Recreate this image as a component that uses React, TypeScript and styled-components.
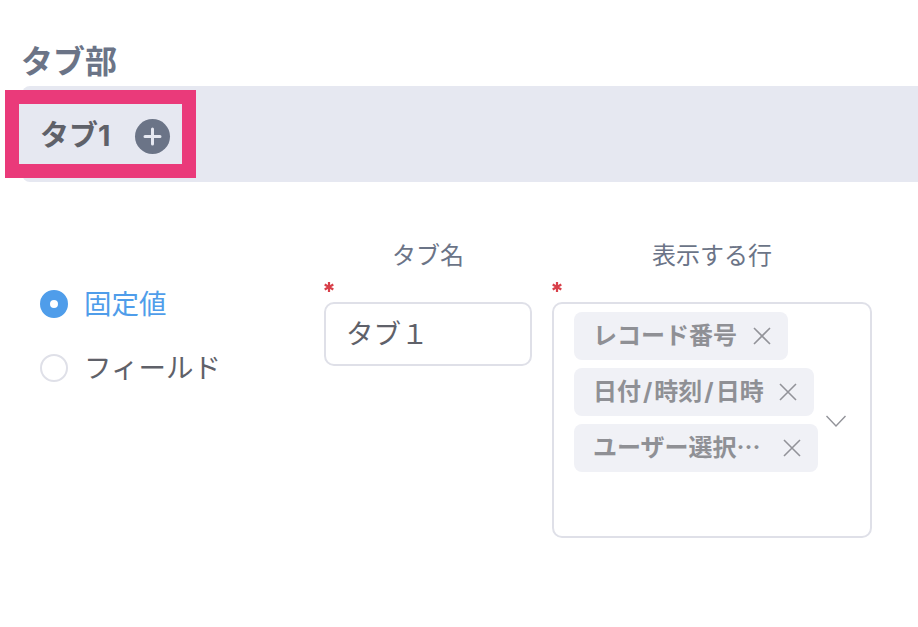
import React from 'react';
import styled, { createGlobalStyle } from 'styled-components';

const GlobalStyle = createGlobalStyle`
  html, body {
    margin: 0;
    padding: 0;
    background: #fff;
    font-family: "Inter", "Noto Sans CJK JP", sans-serif;
  }
`;

const Page = styled.div`
  width: 918px;
  height: 627px;
  overflow: hidden;
  padding-top: 42px;
  box-sizing: border-box;
`;

const Title = styled.h2`
  margin: 0 0 0 21px;
  height: 44px;
  font-size: 32px;
  line-height: 40px;
  font-weight: 700;
  color: #6b7487;
`;

const TabBar = styled.div`
  margin-left: 22px;
  height: 96px;
  display: flex;
  align-items: center;
  background: #e6e8f1;
  border-radius: 8px 0 0 8px;
`;

const Tab = styled.div`
  margin-left: -17px;
  width: 191px;
  height: 88px;
  box-sizing: border-box;
  border: 14px solid #ea3a7a;
  background: #e6e8f1;
  display: flex;
  align-items: center;
  padding-left: 21px;
  font-size: 29px;
  font-weight: 700;
  color: #5f6169;
`;

const TabLabel = styled.span`
  width: 95px;
  margin-bottom: 2px;
`;

const AddButton = styled.span`
  width: 35px;
  height: 35px;
  margin-top: 4px;
  border-radius: 50%;
  background: #6b7487;
  display: flex;
  align-items: center;
  justify-content: center;
`;

const FormRow = styled.div`
  display: flex;
  margin-top: 56px;
`;

const RadioColumn = styled.div`
  width: 324px;
  padding: 46px 0 0 40px;
  box-sizing: border-box;
  display: flex;
  flex-direction: column;
  gap: 24px;
`;

const RadioRow = styled.label<{ $active?: boolean }>`
  height: 40px;
  display: flex;
  align-items: center;
  gap: 16px;
  font-size: 27.5px;
  color: ${p => (p.$active ? '#4f9dea' : '#5f6169')};
`;

const RadioText = styled.span`
  margin-bottom: 4px;
`;

const RadioDot = styled.span<{ $active?: boolean }>`
  width: 28px;
  height: 28px;
  box-sizing: border-box;
  border-radius: 50%;
  background: #fff;
  border: ${p => (p.$active ? '10px solid #4f9dea' : '2px solid #dfe0e8')};
`;

const Field = styled.div<{ $width: number }>`
  width: ${p => p.$width}px;
  margin-right: 20px;
`;

const FieldLabel = styled.div`
  height: 36px;
  line-height: 36px;
  text-align: center;
  font-size: 24px;
  color: #6b7487;
`;

const Required = styled.div`
  height: 28px;
  padding-top: 8px;
  box-sizing: border-box;
`;

const RequiredMark = styled.svg`
  display: block;
  width: 10px;
  height: 10px;
`;

const TextInput = styled.div`
  height: 64px;
  box-sizing: border-box;
  border: 2px solid #dfe0e8;
  border-radius: 10px;
  padding: 0 0 4px 20px;
  display: flex;
  align-items: center;
  font-size: 27.5px;
  color: #5f6169;
`;

const SelectBox = styled.div`
  height: 236px;
  box-sizing: border-box;
  border: 2px solid #dfe0e8;
  border-radius: 10px;
  padding: 8px 0 0 20px;
  display: flex;
`;

const TagList = styled.div`
  display: flex;
  flex-direction: column;
  align-items: flex-start;
  gap: 8px;
`;

const Tag = styled.div<{ $width: number }>`
  width: ${p => p.$width}px;
  height: 48px;
  box-sizing: border-box;
  padding: 0 16px 0 19px;
  display: flex;
  align-items: center;
  justify-content: space-between;
  background: #f0f1f6;
  border-radius: 8px;
  font-size: 24px;
  font-weight: 700;
  color: #8f9095;
  white-space: nowrap;
`;

const TagLabel = styled.span`
  margin-bottom: 6px;
`;

const Slash = styled.span`
  margin: 0 2px;
`;

const Chevron = styled.svg`
  margin: 103px 0 0 8px;
  width: 20px;
  height: 12px;
`;

const CloseIcon = () => (
  <svg width="20" height="20" viewBox="0 0 20 20" fill="none" stroke="#929399" strokeWidth="1.6">
    <path d="M2 2 L18 18 M18 2 L2 18" />
  </svg>
);

const Asterisk = () => (
  <RequiredMark viewBox="0 0 10 10" fill="none" stroke="#d8404a" strokeWidth="2.2">
    <path d="M5 0 V10 M0.7 2.5 L9.3 7.5 M9.3 2.5 L0.7 7.5" />
  </RequiredMark>
);

const tags = [
  { key: 'record', label: <>レコード番号</>, width: 214 },
  { key: 'date', label: <>日付<Slash>/</Slash>時刻<Slash>/</Slash>日時</>, width: 240 },
  { key: 'user', label: <>ユーザー選択⋯</>, width: 244 },
];

export default function App() {
  return (
    <Page>
      <GlobalStyle />
      <Title>タブ部</Title>
      <TabBar>
        <Tab>
          <TabLabel>タブ1</TabLabel>
          <AddButton>
            <svg width="19" height="19" viewBox="0 0 19 19" stroke="#e6e8f1" strokeWidth="3" strokeLinecap="round">
              <path d="M9.5 2 V17 M2 9.5 H17" />
            </svg>
          </AddButton>
        </Tab>
      </TabBar>
      <FormRow>
        <RadioColumn>
          <RadioRow $active>
            <RadioDot $active />
            <RadioText>固定値</RadioText>
          </RadioRow>
          <RadioRow>
            <RadioDot />
            <RadioText>フィールド</RadioText>
          </RadioRow>
        </RadioColumn>
        <Field $width={208}>
          <FieldLabel>タブ名</FieldLabel>
          <Required>
            <Asterisk />
          </Required>
          <TextInput>タブ１</TextInput>
        </Field>
        <Field $width={320}>
          <FieldLabel>表示する行</FieldLabel>
          <Required>
            <Asterisk />
          </Required>
          <SelectBox>
            <TagList>
              {tags.map(t => (
                <Tag key={t.key} $width={t.width}>
                  <TagLabel>{t.label}</TagLabel>
                  <CloseIcon />
                </Tag>
              ))}
            </TagList>
            <Chevron viewBox="0 0 20 12" fill="none" stroke="#929399" strokeWidth="1.4">
              <path d="M0.5 1 L10 11 L19.5 1" />
            </Chevron>
          </SelectBox>
        </Field>
      </FormRow>
    </Page>
  );
}
